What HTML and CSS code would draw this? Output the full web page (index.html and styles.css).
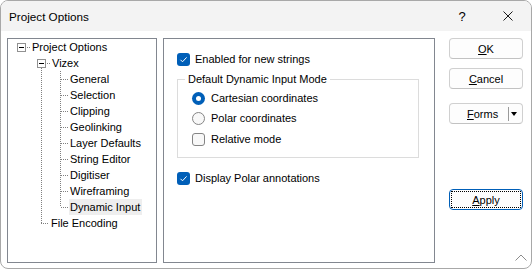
FILE: index.html
```html
<!DOCTYPE html>
<html lang="en">
<head>
    <meta charset="UTF-8">
    <meta name="viewport" content="width=device-width, initial-scale=1.0">
    <title>Project Options</title>
    <link rel="stylesheet" href="styles.css">
</head>
<body>
    <div class="window">
        <div class="titlebar">
            <span class="title">Project Options</span>
            <span class="caption-btn help">?</span>
            <span class="caption-btn close">
                <svg width="10" height="10" viewBox="0 0 10 10"><path d="M0.5 0.5 L9.5 9.5 M9.5 0.5 L0.5 9.5" stroke="#1a1a1a" stroke-width="1" fill="none"/></svg>
            </span>
        </div>

        <div class="client">
            <div class="tree">
                <div class="row root"><span class="expander"></span><span class="dash short"></span><span class="label">Project Options</span></div>
                <div class="level1">
                    <div class="row"><span class="expander"></span><span class="dash short"></span><span class="label">Vizex</span></div>
                    <div class="level2">
                        <div class="row"><span class="dash long"></span><span class="label">General</span></div>
                        <div class="row"><span class="dash long"></span><span class="label">Selection</span></div>
                        <div class="row"><span class="dash long"></span><span class="label">Clipping</span></div>
                        <div class="row"><span class="dash long"></span><span class="label">Geolinking</span></div>
                        <div class="row"><span class="dash long"></span><span class="label">Layer Defaults</span></div>
                        <div class="row"><span class="dash long"></span><span class="label">String Editor</span></div>
                        <div class="row"><span class="dash long"></span><span class="label">Digitiser</span></div>
                        <div class="row"><span class="dash long"></span><span class="label">Wireframing</span></div>
                        <div class="row"><span class="dash long"></span><span class="label selected">Dynamic Input</span></div>
                    </div>
                    <div class="row"><span class="dash sibling"></span><span class="label">File Encoding</span></div>
                </div>
            </div>

            <div class="page">
                <div class="option">
                    <span class="checkbox checked">
                        <svg width="13" height="13" viewBox="0 0 13 13"><path d="M3.5 6.8 L5.5 8.8 L9.6 4.4" stroke="#fff" stroke-width="1" fill="none"/></svg>
                    </span>
                    <span>Enabled for new strings</span>
                </div>

                <fieldset class="group">
                    <legend>Default Dynamic Input Mode</legend>
                    <div class="group-body">
                        <div class="option radio-row"><span class="radio checked"></span><span>Cartesian coordinates</span></div>
                        <div class="option radio-row"><span class="radio"></span><span>Polar coordinates</span></div>
                        <div class="option radio-row relative"><span class="checkbox"></span><span>Relative mode</span></div>
                    </div>
                </fieldset>

                <div class="option polar">
                    <span class="checkbox checked">
                        <svg width="13" height="13" viewBox="0 0 13 13"><path d="M3.5 6.8 L5.5 8.8 L9.6 4.4" stroke="#fff" stroke-width="1" fill="none"/></svg>
                    </span>
                    <span>Display Polar annotations</span>
                </div>
            </div>

            <div class="buttons">
                <div class="btn"><span><u>O</u>K</span></div>
                <div class="btn cancel"><span><u>C</u>ancel</span></div>
                <div class="btn split"><span class="split-text"><u>F</u>orms</span><span class="split-sep"></span><span class="split-arrow"></span></div>
                <div class="btn default apply"><span class="focus"><u>A</u>pply</span></div>
            </div>
        </div>

        <svg class="grip" width="12" height="7" viewBox="0 0 12 7"><path d="M0.5 6.5 L6 1 L11.5 6.5" stroke="#8c8c8c" stroke-width="1" fill="none"/></svg>
    </div>
</body>
</html>
```

FILE: styles.css
```css
body {
    margin: 0;
    background: #fff;
    font-family: "Liberation Sans", Arial, sans-serif;
    font-size: 11px;
    color: #000;
}
.window {
    position: relative;
    width: 532px;
    height: 269px;
    box-sizing: border-box;
    border: 1px solid #a8a8a8;
    border-radius: 8px;
    overflow: hidden;
    background: #fff;
}
.titlebar {
    display: flex;
    align-items: center;
    height: 30px;
    background: #f3f3f3;
}
.title {
    flex: 1;
    padding-left: 8px;
    font-size: 11.7px;
}
.caption-btn {
    display: flex;
    align-items: center;
    justify-content: center;
    width: 46px;
    height: 30px;
}
.help {
    font-size: 13px;
}

.client {
    display: flex;
    padding: 7px 8px 0 6px;
}

/* tree */
.tree {
    width: 150px;
    height: 225px;
    box-sizing: border-box;
    border: 1px solid #828790;
    background: #fff;
}
.row {
    display: flex;
    align-items: center;
    height: 16px;
}
.root {
    padding-left: 9px;
}
.expander {
    display: flex;
    align-items: center;
    justify-content: center;
    flex: none;
    width: 9px;
    height: 9px;
    box-sizing: border-box;
    border: 1px solid #919191;
    background: #fff;
}
.expander::before {
    content: "";
    width: 5px;
    height: 1px;
    background: #000;
}
.dash {
    flex: none;
    height: 1px;
    background: repeating-linear-gradient(to right, #808080 0 1px, transparent 1px 2px);
}
.dash.short {
    width: 3px;
    margin-left: 1px;
}
.dash.long {
    width: 7px;
    margin-left: 1px;
}
.dash.sibling {
    width: 8px;
    margin-left: 4px;
}
.label {
    margin-left: 1px;
    padding: 0 2px 0 1px;
    line-height: 16px;
    white-space: nowrap;
}
.label.selected {
    background: #eeeeee;
}
.level1 {
    margin-left: 29px;
    background-image: repeating-linear-gradient(to bottom, #808080 0 1px, transparent 1px 2px);
    background-repeat: no-repeat;
    background-position: 4px 13px;
    background-size: 1px calc(100% - 21px);
}
.level2 {
    margin-left: 23px;
    background-image: repeating-linear-gradient(to bottom, #808080 0 1px, transparent 1px 2px);
    background-repeat: no-repeat;
    background-position: 0 0;
    background-size: 1px calc(100% - 8px);
}

/* options page */
.page {
    width: 272px;
    height: 225px;
    margin-left: 6px;
    box-sizing: border-box;
    border: 1px solid #828790;
    padding: 10px 0 0 13px;
    background: #fff;
}
.option {
    display: flex;
    align-items: center;
    gap: 5px;
    height: 20px;
    white-space: nowrap;
}
.checkbox {
    display: flex;
    flex: none;
    width: 13px;
    height: 13px;
    box-sizing: border-box;
    border: 1px solid #858585;
    border-radius: 3px;
    background: #f8f8f8;
}
.checkbox.checked {
    border: none;
    background: #005fb8;
}
.radio {
    display: flex;
    align-items: center;
    justify-content: center;
    flex: none;
    width: 13px;
    height: 13px;
    box-sizing: border-box;
    border: 1px solid #858585;
    border-radius: 50%;
    background: #f8f8f8;
}
.radio.checked {
    border: none;
    background: #005fb8;
}
.radio.checked::before {
    content: "";
    width: 5px;
    height: 5px;
    border-radius: 50%;
    background: #fff;
}
.radio-row {
    gap: 6px;
}
.relative {
    margin-top: 1px;
    gap: 6px;
}
.group {
    width: 242px;
    margin: 3px 0 0 0;
    padding: 0 0 8px 0;
    box-sizing: border-box;
    border: 1px solid #dcdcdc;
}
.group legend {
    margin-left: 7px;
    padding: 0 3px;
    line-height: 14px;
}
.group-body {
    padding: 2px 0 0 14px;
}
.polar {
    margin-top: 10px;
}

/* buttons */
.buttons {
    display: flex;
    flex-direction: column;
    width: 74px;
    margin-left: 14px;
}
.btn {
    display: flex;
    align-items: center;
    justify-content: center;
    height: 21px;
    box-sizing: border-box;
    border: 1px solid #d0d0d0;
    border-bottom-color: #c2c2c2;
    border-radius: 4px;
    background: #fdfdfd;
}
.cancel {
    margin-top: 9px;
}
.split {
    justify-content: flex-start;
    margin-top: 14px;
    padding-left: 17px;
}
.split-sep {
    width: 1px;
    height: 14px;
    margin-left: 10px;
    background: #9a9a9a;
}
.split-arrow {
    width: 0;
    height: 0;
    margin-left: 2px;
    border-left: 3.5px solid transparent;
    border-right: 3.5px solid transparent;
    border-top: 4px solid #000;
}
.apply {
    margin-top: 65px;
    border-color: #005fb8;
}
.focus {
    display: flex;
    align-items: center;
    justify-content: center;
    align-self: stretch;
    flex: 1;
    margin: 1px;
    border: 1px dotted #000;
}
.grip {
    position: absolute;
    right: 4px;
    bottom: 7px;
}
```
